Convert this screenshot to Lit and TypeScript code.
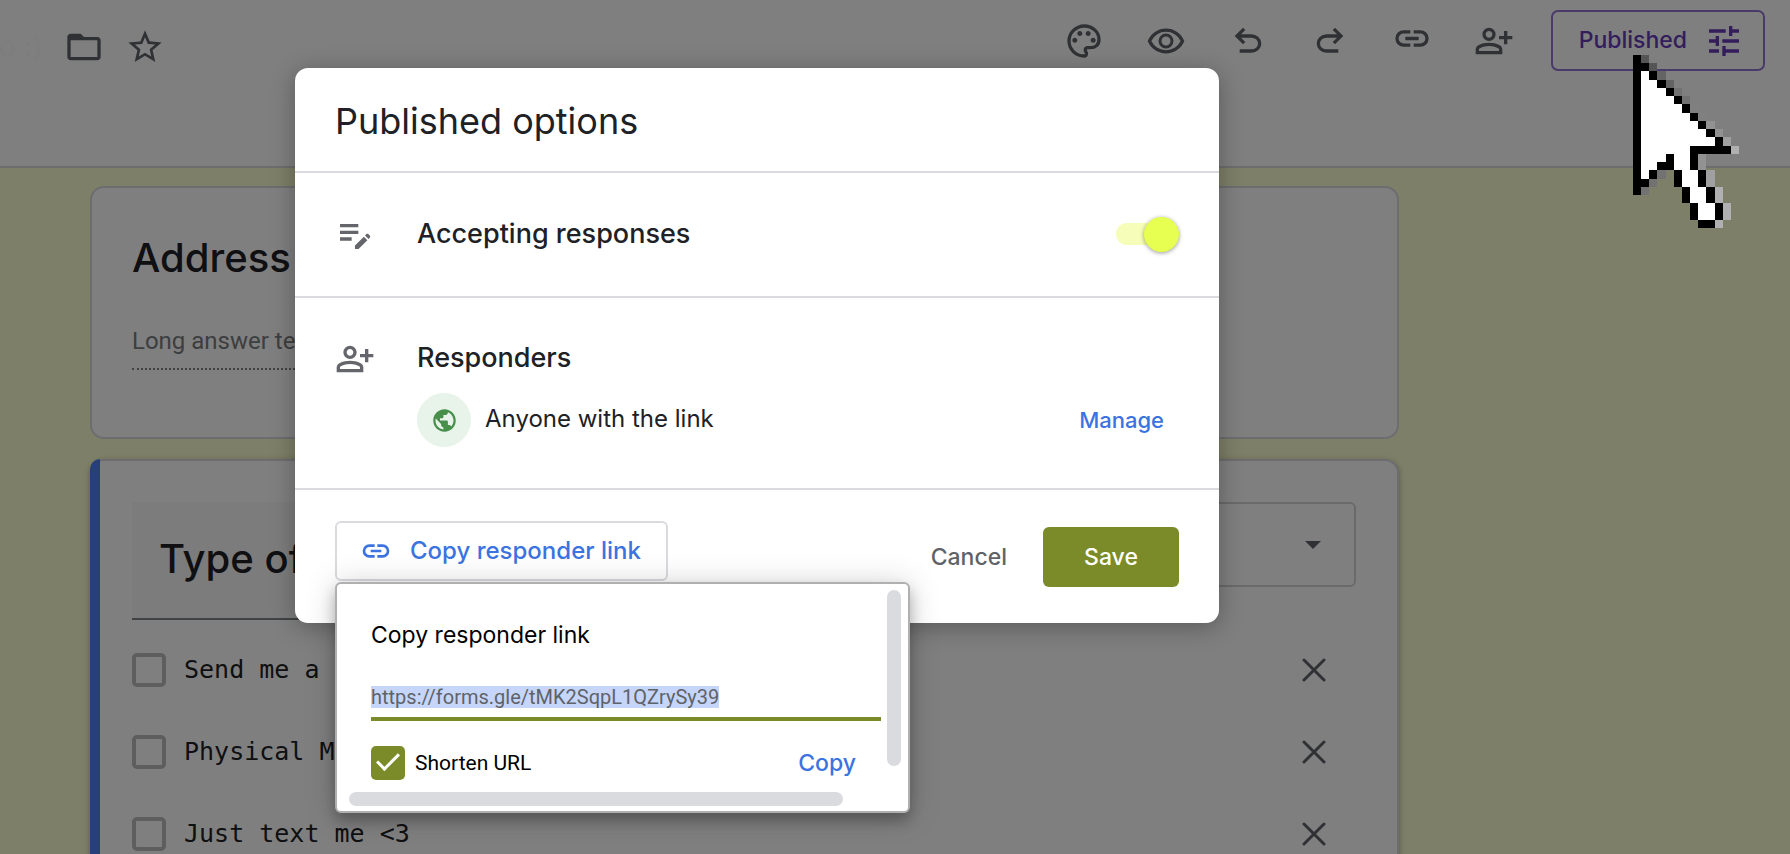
import { LitElement, html, css, svg } from 'lit';
import { customElement, state, property } from 'lit/decorators.js';

const ICONS: Record<string, { box: string; d: string }> = {
  palette: {
    box: '0 -960 960 960',
    d: 'M480-80q-82 0-155-31.5t-127.5-86Q143-252 111.5-325T80-480q0-83 32.5-156t88-127Q256-817 330-848.5T488-880q80 0 151 27.5t124.5 76q53.5 48.5 85 115T880-518q0 115-70 176.5T640-280h-74q-9 0-12.5 5t-3.5 11q0 12 15 34.5t15 51.5q0 50-27.5 74T480-80Zm-220-360q26 0 43-17t17-43q0-26-17-43t-43-17q-26 0-43 17t-17 43q0 26 17 43t43 17Zm120-160q26 0 43-17t17-43q0-26-17-43t-43-17q-26 0-43 17t-17 43q0 26 17 43t43 17Zm200 0q26 0 43-17t17-43q0-26-17-43t-43-17q-26 0-43 17t-17 43q0 26 17 43t43 17Zm120 160q26 0 43-17t17-43q0-26-17-43t-43-17q-26 0-43 17t-17 43q0 26 17 43t43 17ZM480-160q9 0 14.5-5t5.5-13q0-14-15-33t-15-57q0-42 29-67t71-25h70q66 0 113-38.5T800-518q0-121-92.5-201.5T488-800q-136 0-232 93t-96 227q0 133 93.5 226.5T480-160Z',
  },
  preview: {
    box: '0 -980 960 960',
    d: 'M480-320q75 0 127.5-52.5T660-500q0-75-52.5-127.5T480-680q-75 0-127.5 52.5T300-500q0 75 52.5 127.5T480-320Zm0-72q-45 0-76.5-31.5T372-500q0-45 31.5-76.5T480-608q45 0 76.5 31.5T588-500q0 45-31.5 76.5T480-392Zm0 192q-146 0-266-81.5T40-500q54-137 174-218.5T480-800q146 0 266 81.5T920-500q-54 137-174 218.5T480-200Zm0-80q113 0 207.5-59.5T832-500q-50-101-144.5-160.5T480-720q-113 0-207.5 59.5T128-500q50 101 144.5 160.5T480-280Z',
  },
  undo: {
    box: '0 -960 960 960',
    d: 'M280-200v-80h284q63 0 109.5-40T720-420q0-60-46.5-100T564-560H312l104 104-56 56-200-200 200-200 56 56-104 104h252q97 0 166.5 63T800-420q0 94-69.5 157T564-200H280Z',
  },
  redo: {
    box: '0 -960 960 960',
    d: 'M396-200q-97 0-166.5-63T160-420q0-94 69.5-157T396-640h252L544-744l56-56 200 200-200 200-56-56 104-104H396q-63 0-109.5 40T240-420q0 60 46.5 100T396-280h284v80H396Z',
  },
  link: {
    box: '0 -960 960 960',
    d: 'M440-280H280q-83 0-141.5-58.5T80-480q0-83 58.5-141.5T280-680h160v80H280q-50 0-85 35t-35 85q0 50 35 85t85 35h160v80ZM320-440v-80h320v80H320Zm200 160v-80h160q50 0 85-35t35-85q0-50-35-85t-85-35H520v-80h160q83 0 141.5 58.5T880-480q0 83-58.5 141.5T680-280H520Z',
  },
  linkRaised: {
    box: '0 -900 960 960',
    d: 'M440-280H280q-83 0-141.5-58.5T80-480q0-83 58.5-141.5T280-680h160v80H280q-50 0-85 35t-35 85q0 50 35 85t85 35h160v80ZM320-440v-80h320v80H320Zm200 160v-80h160q50 0 85-35t35-85q0-50-35-85t-85-35H520v-80h160q83 0 141.5 58.5T880-480q0 83-58.5 141.5T680-280H520Z',
  },
  personAdd: {
    box: '0 -960 960 960',
    d: 'M720-400v-120H600v-80h120v-120h80v120h120v80H800v120h-80Zm-360-80q-66 0-113-47t-47-113q0-66 47-113t113-47q66 0 113 47t47 113q0 66-47 113t-113 47ZM40-160v-112q0-34 17.5-62.5T104-378q62-31 126-46.5T360-440q66 0 130 15.5T616-378q29 15 46.5 43.5T680-272v112H40Zm80-80h480v-32q0-11-5.5-20T580-306q-54-27-109-40.5T360-360q-56 0-111 13.5T140-306q-9 5-14.5 14t-5.5 20v32Zm240-320q33 0 56.5-23.5T440-640q0-33-23.5-56.5T360-720q-33 0-56.5 23.5T280-640q0 33 23.5 56.5T360-560Z',
  },
  folder: {
    box: '0 0 24 24',
    d: 'M20 6h-8l-2-2H4c-1.1 0-2 .9-2 2v12c0 1.1.9 2 2 2h16c1.1 0 2-.9 2-2V8c0-1.1-.9-2-2-2zm0 12H4V8h16v10z',
  },
  star: {
    box: '0 0 24 24',
    d: 'M22 9.24l-7.19-.62L12 2 9.19 8.63 2 9.24l5.46 4.73L5.82 21 12 17.27 18.18 21l-1.63-7.03L22 9.24zM12 15.4l-3.76 2.27 1-4.28-3.32-2.88 4.38-.38L12 6.1l1.71 4.04 4.38.38-3.32 2.88 1 4.28L12 15.4z',
  },
  tune: {
    box: '0 0 24 24',
    d: 'M3 17v2h6v-2H3zM3 5v2h10V5H3zm10 16v-2h8v-2h-8v-2h-2v6h2zM7 9v2H3v2h4v2h2V9H7zm14 4v-2H11v2h10zm-6-4h2V7h4V5h-4V3h-2v6z',
  },
  editNote: {
    box: '0 0 24 24',
    d: 'M3 10h11v2H3v-2zm0-2h11V6H3v2zm0 8h7v-2H3v2zm15.01-3.13.71-.71c.39-.39 1.02-.39 1.41 0l.71.71c.39.39.39 1.02 0 1.41l-.71.71-2.12-2.12zm-.71.71-5.3 5.3V21h2.12l5.3-5.3-2.12-2.12z',
  },
  globe: {
    box: '0 0 24 24',
    d: 'M12 2C6.48 2 2 6.48 2 12s4.48 10 10 10 10-4.48 10-10S17.52 2 12 2zm-1 17.93c-3.95-.49-7-3.85-7-7.93 0-.62.08-1.21.21-1.79L9 15v1c0 1.1.9 2 2 2v1.93zm6.9-2.54c-.26-.81-1-1.39-1.9-1.39h-1v-3c0-.55-.45-1-1-1H8v-2h2c.55 0 1-.45 1-1V7h2c1.1 0 2-.9 2-2v-.41c2.93 1.19 5 4.06 5 7.41 0 2.08-.8 3.97-2.1 5.39z',
  },
};

const icon = (name: string, size = '') =>
  html`<svg class="icon ${size}" viewBox=${ICONS[name].box} aria-hidden="true"><path d=${ICONS[name].d}></path></svg>`;

/* Pixel pointer: K outline, W fill, digits are the shades of its drop shadow. */
const POINTER = [
  'K0',
  'KK0',
  'KWK1',
  'KWWK1',
  'KWWWK2',
  'KWWWWK2',
  'KWWWWWK3',
  'KWWWWWWK3',
  'KWWWWWWWK4',
  'KWWWWWWWWK4',
  'KWWWWWWWWWK5',
  'KWWWWWWKKKKK6',
  'KWWWKWWK4',
  'KWWKKWWK4',
  'KWK2.KWWK5',
  'KK2..KWWK5',
  'K2....KWWK6',
  '......KWWK6',
  '.......KWWK6',
  '.......KWWK6',
  '........KK6',
];
const SHADES = ['#555', '#646464', '#727272', '#808080', '#929292', '#a0a0a0', '#b0b0b0'];

@customElement('pixel-pointer')
class PixelPointer extends LitElement {
  static styles = css`
    :host { display: block; }
    .art { display: block; width: 100%; height: 100%; }
  `;
  private fill(c: string) {
    return c === 'K' ? '#000' : c === 'W' ? '#fff' : SHADES[Number(c)];
  }
  render() {
    return html`<svg class="art" viewBox="0 0 13 21" preserveAspectRatio="none" shape-rendering="crispEdges" aria-hidden="true">
      ${POINTER.flatMap((row, y) =>
        [...row].map((c, x) => (c === '.' ? null : svg`<rect x=${x} y=${y} width="1" height="1" fill=${this.fill(c)}></rect>`))
      )}
    </svg>`;
  }
}

@customElement('link-popover')
class LinkPopover extends LitElement {
  @property() url = '';
  @state() private shorten = true;

  static styles = css`
    :host {
      display: block;
      box-sizing: border-box;
      position: relative;
      width: 575px;
      padding: 37px 27px 31px 34px;
      border: 2px solid #b0b0b0;
      border-radius: 6px;
      background: #fff;
      color: #000;
      box-shadow: 0 8px 14px rgba(0, 0, 0, 0.24), 0 2px 32px rgba(0, 0, 0, 0.18);
    }
    .title { margin: 0 0 37px; font: 400 23px/28px Inter, sans-serif; }
    .field { display: flex; padding-bottom: 9px; border-bottom: 4px solid #7c8b29; }
    .url {
      field-sizing: content;
      height: 22px;
      padding: 0;
      border: 0;
      outline: 0;
      background: #c6d6fb;
      color: #5f6368;
      font: 400 20px/22px Roboto, sans-serif;
    }
    .row { display: flex; align-items: center; justify-content: space-between; margin-top: 25px; }
    .check { display: flex; align-items: center; gap: 10px; font: 400 21px/34px Roboto, sans-serif; }
    .box {
      appearance: none;
      display: grid;
      place-items: center;
      width: 34px;
      height: 34px;
      margin: 0;
      border-radius: 5px;
      background: #7c8b29;
    }
    .box:checked::before {
      content: '';
      box-sizing: border-box;
      width: 22px;
      height: 12px;
      margin-top: -8px;
      border: solid #fff;
      border-width: 0 0 3px 3px;
      transform: rotate(-45deg);
    }
    .copy {
      padding: 0 25px;
      border: 0;
      background: none;
      color: #3b73e0;
      font: 500 23px/34px Inter, sans-serif;
    }
    .bar { position: absolute; border-radius: 7px; background: #dadbdf; }
    .bar.v { top: 6px; right: 7px; bottom: 45px; width: 14px; }
    .bar.h { left: 12px; right: 65px; bottom: 5px; height: 14px; }
  `;
  render() {
    return html`
      <h3 class="title">Copy responder link</h3>
      <div class="field"><input class="url" aria-label="Copy responder link" readonly .value=${this.url} /></div>
      <div class="row">
        <label class="check">
          <input class="box" type="checkbox" .checked=${this.shorten} @change=${() => (this.shorten = !this.shorten)} />
          Shorten URL
        </label>
        <button class="copy" type="button">Copy</button>
      </div>
      <span class="bar v"></span>
      <span class="bar h"></span>
    `;
  }
}

@customElement('app-root')
class AppRoot extends LitElement {
  @state() private accepting = true;
  private options = ['Send me a', 'Physical M', 'Just text me <3'];
  private tools = [
    ['palette', 'Customize theme'],
    ['preview', 'Preview'],
    ['undo', 'Undo'],
    ['redo', 'Redo'],
    ['linkRaised', 'Responder link'],
    ['personAdd', 'Share'],
  ];

  static styles = css`
    :host {
      display: flex;
      flex-direction: column;
      position: relative;
      height: 100vh;
      overflow: hidden;
      background: #fafed0;
      color: #202124;
      font-family: Inter, sans-serif;
    }
    button { padding: 0; border: 0; background: none; color: inherit; font: inherit; }
    .icon { display: block; flex: none; width: 40px; height: 40px; fill: currentColor; }
    .icon.medium { width: 32px; height: 32px; }
    .icon.small { width: 27px; height: 27px; }

    .top {
      display: flex;
      justify-content: space-between;
      align-items: flex-start;
      flex: none;
      box-sizing: border-box;
      height: 168px;
      padding: 10px 25px 0 0;
      border-bottom: 2px solid #dadbdf;
      background: #fff;
      color: #5f6368;
    }
    .file { display: flex; align-items: center; gap: 21px; padding-top: 17px; }
    .name { display: flex; justify-content: flex-end; width: 43px; white-space: pre; font-size: 29px; line-height: 40px; color: #fafafa; }
    .tools { display: flex; align-items: center; }
    .tool { display: grid; place-items: center; width: 82px; height: 61px; }
    .published {
      display: flex;
      align-items: center;
      gap: 16px;
      box-sizing: border-box;
      height: 61px;
      margin-left: 16px;
      padding: 0 19px 0 26px;
      border: 2px solid #9575d4;
      border-radius: 7px;
      color: #673ab7;
      font: 500 23px/40px Inter, sans-serif;
    }
    .state { padding: 0 1px 2px 0; }

    .form { display: grid; gap: 20px; max-width: 1309px; padding: 18px 0 0 90px; }
    .card { box-sizing: border-box; border: 2px solid #dadbdf; border-radius: 14px; background: #fff; }
    .short { padding: 46px 40px 67px; }
    .question { margin: 0; font: 500 40px/48px Inter, sans-serif; }
    .answer {
      display: block;
      width: 60%;
      height: 28px;
      margin-top: 45px;
      padding: 0 0 13px;
      border: 0;
      border-bottom: 2px dotted #80868b;
      border-radius: 0;
      background: none;
      font: 400 24px/28px Roboto, sans-serif;
    }
    .answer::placeholder { color: #787c80; opacity: 1; }
    .active {
      position: relative;
      padding: 41px 41px 41px 42px;
      border-left: 0;
      box-shadow: 0 2px 6px rgba(0, 0, 0, 0.3);
    }
    .active::before {
      content: '';
      position: absolute;
      inset: -2px auto 0 0;
      width: 10px;
      border-radius: 10px 0 0 0;
      background: #5080f0;
    }
    .head { display: flex; gap: 32px; align-items: flex-start; }
    .edit {
      flex: 1;
      min-width: 0;
      height: 112px;
      padding: 0 27px 4px;
      border: 0;
      border-bottom: 2px solid #80868b;
      background: #f8f8f9;
      color: inherit;
      font: 500 40px/48px Inter, sans-serif;
    }
    .kind { display: flex; align-items: center; box-sizing: border-box; width: 400px; height: 85px; border: 2px solid #d4d4d6; border-radius: 6px; }
    .kind select { appearance: none; flex: 1; align-self: stretch; padding: 0 28px; border: 0; background: none; color: inherit; font: 400 23px/28px Inter, sans-serif; }
    .caret { width: 16px; height: 8px; margin-right: 33px; fill: #5f6368; }
    .options { display: grid; margin: 9px 0 0; padding: 0; list-style: none; }
    .option { display: flex; align-items: center; justify-content: space-between; height: 82px; }
    .choice { display: flex; align-items: center; gap: 18px; font: 400 25px/34px "DejaVu Sans Mono", monospace; }
    .tick { appearance: none; box-sizing: border-box; width: 34px; height: 34px; margin: 0; border: 4px solid #bdbdbd; border-radius: 5px; }
    .remove { display: grid; place-items: center; width: 84px; height: 60px; color: #5f6368; }
    .cross { width: 24px; height: 24px; stroke: currentColor; stroke-width: 3; stroke-linecap: round; }

    .scrim {
      position: absolute;
      inset: 0;
      display: flex;
      align-items: flex-start;
      padding: 68px 40px 0 295px;
      background: rgba(0, 0, 0, 0.5);
    }
    .dialog {
      flex: 1;
      max-width: 924px;
      border-radius: 13px;
      background: #fff;
      box-shadow: 0 4px 24px rgba(0, 0, 0, 0.3);
    }
    .title { margin: 0; padding: 31px 40px 28px; font: 400 36px/44px Inter, sans-serif; }
    .row { display: flex; gap: 42px; border-top: 2px solid #dadbdf; padding: 41px 40px; }
    .row > .icon { color: #65666b; }
    .accept { align-items: center; padding: 41px 40px 42px; }
    .label { flex: 1; font: 500 27px/36px Inter, sans-serif; }
    .switch { appearance: none; position: relative; width: 63px; height: 35px; margin: 0; }
    .switch::before { content: ''; position: absolute; inset: 6px 8px 7px 0; border-radius: 11px; background: #f6fdb8; }
    .switch::after {
      content: '';
      position: absolute;
      inset: 0 0 0 auto;
      width: 35px;
      border-radius: 50%;
      background: #e6ff50;
      box-shadow: 0 1px 4px rgba(0, 0, 0, 0.4);
    }
    .who { flex: 1; }
    .heading { margin: 0 0 16px; font: 500 27px/38px Inter, sans-serif; }
    .access { display: flex; align-items: center; gap: 14px; }
    .avatar { display: grid; place-items: center; width: 54px; height: 54px; border-radius: 50%; background: #e8f3ea; color: #478f4b; }
    .scope { flex: 1; padding-bottom: 3px; font: 400 24px/36px Inter, sans-serif; }
    .manage { padding: 0 15px; color: #3b73e0; font: 500 22px/36px Inter, sans-serif; }
    .foot { display: flex; justify-content: space-between; border-top: 2px solid #dadbdf; padding: 31px 40px 36px; }
    .anchor { position: relative; align-self: flex-start; }
    .share {
      display: flex;
      align-items: center;
      gap: 18px;
      box-sizing: border-box;
      height: 60px;
      padding: 0 25px 0 23px;
      border: 2px solid #dadbdf;
      border-radius: 6px;
      color: #3b73e0;
      font: 500 24px/36px Inter, sans-serif;
    }
    .popover { position: absolute; top: 61px; left: 0; }
    .actions { display: flex; gap: 12px; margin-top: 6px; font: 500 23px/60px Inter, sans-serif; }
    .cancel { padding: 0 24px; color: #5f6368; }
    .save { width: 136px; border-radius: 6px; background: #7c8b29; color: #fff; }
    .pointer { position: absolute; top: 55px; right: 51px; width: 106px; height: 173px; }
  `;

  render() {
    return html`
      <header class="top">
        <div class="file">
          <span class="name">o :)</span>
          <button type="button" aria-label="Move to folder">${icon('folder')}</button>
          <button type="button" aria-label="Star">${icon('star')}</button>
        </div>
        <div class="tools">
          ${this.tools.map(([name, label]) => html`<button class="tool" type="button" aria-label=${label}>${icon(name)}</button>`)}
          <button class="published" type="button"><span class="state">Published</span>${icon('tune')}</button>
        </div>
      </header>

      <main class="form">
        <section class="card short">
          <h2 class="question">Address</h2>
          <input class="answer" aria-label="Address" placeholder="Long answer text" disabled />
        </section>
        <section class="card active">
          <div class="head">
            <input class="edit" aria-label="Question" value="Type of" />
            <div class="kind">
              <select aria-label="Question type"><option>Checkboxes</option></select>
              <svg class="caret" viewBox="0 0 16 8" aria-hidden="true"><path d="M0 0h16L8 8z"></path></svg>
            </div>
          </div>
          <ul class="options">
            ${this.options.map(
              (text) => html`<li class="option">
                <label class="choice"><input class="tick" type="checkbox" />${text}</label>
                <button class="remove" type="button" aria-label="Remove option">
                  <svg class="cross" viewBox="0 0 24 24" aria-hidden="true"><path d="M2 2l20 20M22 2L2 22"></path></svg>
                </button>
              </li>`
            )}
          </ul>
        </section>
      </main>

      <div class="scrim">
        <div class="dialog" role="dialog" aria-labelledby="title">
          <h1 class="title" id="title">Published options</h1>
          <div class="row accept">
            ${icon('editNote')}
            <label class="label" for="accepting">Accepting responses</label>
            <input
              class="switch"
              id="accepting"
              type="checkbox"
              role="switch"
              .checked=${this.accepting}
              @change=${() => (this.accepting = !this.accepting)}
            />
          </div>
          <div class="row">
            ${icon('personAdd')}
            <div class="who">
              <h2 class="heading">Responders</h2>
              <div class="access">
                <span class="avatar">${icon('globe', 'small')}</span>
                <span class="scope">Anyone with the link</span>
                <button class="manage" type="button">Manage</button>
              </div>
            </div>
          </div>
          <div class="foot">
            <div class="anchor">
              <button class="share" type="button">${icon('link', 'medium')}Copy responder link</button>
              <link-popover class="popover" url="https://forms.gle/tMK2SqpL1QZrySy39"></link-popover>
            </div>
            <div class="actions">
              <button class="cancel" type="button">Cancel</button>
              <button class="save" type="button">Save</button>
            </div>
          </div>
        </div>
        <pixel-pointer class="pointer"></pixel-pointer>
      </div>
    `;
  }
}
